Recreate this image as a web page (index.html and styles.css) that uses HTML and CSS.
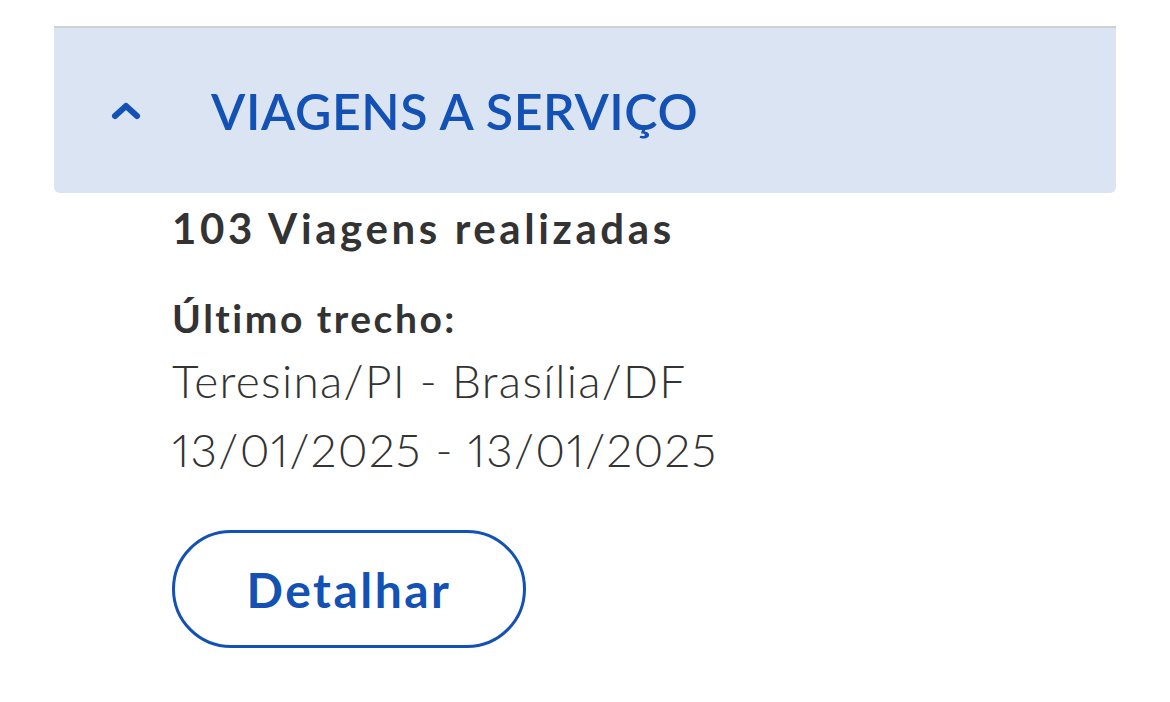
FILE: index.html
```html
<!DOCTYPE html>
<html lang="pt-BR">
<head>
    <meta charset="UTF-8">
    <meta name="viewport" content="width=device-width, initial-scale=1.0">
    <title>Viagens a Serviço</title>
    <link rel="stylesheet" href="styles.css">
</head>
<body>
    <div class="panel">
        <div class="panel-header">
            <span class="chevron">
                <svg width="32" height="20" viewBox="0 0 32 20">
                    <path d="M5 15 L16 5 L27 15" fill="none" stroke="#1351b4" stroke-width="6" stroke-linecap="round" stroke-linejoin="round"/>
                </svg>
            </span>
            <h2 class="panel-title">VIAGENS A SERVIÇO</h2>
        </div>
        <div class="panel-body">
            <p class="count">103 Viagens realizadas</p>
            <p class="label">Último trecho:</p>
            <p class="info">Teresina/PI - Brasília/DF</p>
            <p class="info">13/01/2025 - 13/01/2025</p>
            <button class="detail-btn">Detalhar</button>
        </div>
    </div>
</body>
</html>
```

FILE: styles.css
```css
body {
    font-family: Lato, "Open Sans", sans-serif;
    background-color: #fff;
    margin: 0;
    padding: 26px 54px 0 54px;
    color: #333;
}
.panel {
    border-top: 2px solid #cfcfcf;
}
.panel-header {
    display: flex;
    align-items: center;
    height: 165px;
    background-color: #dbe4f3;
    border-radius: 0 0 6px 6px;
}
.chevron {
    display: flex;
    width: 32px;
    margin-left: 56px;
    margin-right: 69px;
}
.panel-title {
    margin: 0;
    font-size: 50px;
    font-weight: 600;
    letter-spacing: 0.6px;
    color: #1351b4;
}
.panel-body {
    padding: 7px 0 0 118px;
}
.count {
    margin: 0;
    font-size: 42px;
    font-weight: 700;
    letter-spacing: 3.6px;
    line-height: 56px;
}
.label {
    margin: 34px 0 0 0;
    font-size: 39px;
    font-weight: 700;
    letter-spacing: 2.5px;
    line-height: 56px;
}
.info {
    margin: 0;
    font-size: 46px;
    font-weight: 300;
    letter-spacing: 1.3px;
    line-height: 69px;
    font-variant-numeric: proportional-nums;
}
.detail-btn {
    margin-top: 46px;
    width: 354px;
    height: 118px;
    border: 3px solid #1351b4;
    border-radius: 60px;
    background: #fff;
    color: #1351b4;
    font-family: Lato, "Open Sans", sans-serif;
    font-size: 48px;
    font-weight: 700;
    letter-spacing: 2.5px;
}
```
